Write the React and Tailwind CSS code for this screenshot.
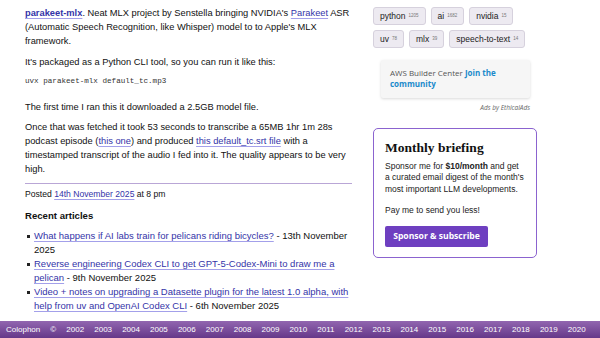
const years = Array.from({ length: 19 }, (_, i) => 2002 + i);

const tags = [
  ["python", "1205"],
  ["ai", "1682"],
  ["nvidia", "15"],
  ["uv", "78"],
  ["mlx", "39"],
  ["speech-to-text", "14"],
];

const recent = [
  ["What happens if AI labs train for pelicans riding bicycles?", "13th November 2025"],
  ["Reverse engineering Codex CLI to get GPT-5-Codex-Mini to draw me a pelican", "9th November 2025"],
  ["Video + notes on upgrading a Datasette plugin for the latest 1.0 alpha, with help from uv and OpenAI Codex CLI", "6th November 2025"],
];

function A({ children, bold }) {
  return (
    <a
      href="#"
      className={`text-[#3434a8] underline decoration-[#a3a0ea] underline-offset-2 ${bold ? "font-bold" : ""}`}
    >
      {children}
    </a>
  );
}

export default function App() {
  return (
    <div className="w-[600px] h-[338px] overflow-hidden bg-white font-['Liberation_Sans',Arial,sans-serif] text-[#111]">
      <div className="h-[321px] overflow-hidden flex">
        {/* Main column */}
        <div className="ml-[25px] w-[333px] shrink-0 pt-[6px] text-[9.3px] leading-[14px]">
          <p className="mb-[7px]">
            <A bold>parakeet-mlx</A>. Neat MLX project by Senstella bringing NVIDIA's <A>Parakeet</A> ASR
            (Automatic Speech Recognition, like Whisper) model to to Apple's MLX framework.
          </p>
          <p className="mb-[5px]">It's packaged as a Python CLI tool, so you can run it like this:</p>
          <div className="font-['Liberation_Mono','Courier_New',monospace] text-[7.6px] leading-[14px] text-[#333] mb-[12px] whitespace-pre">
            uvx parakeet-mlx default_tc.mp3
          </div>
          <p className="mb-[6px]">The first time I ran this it downloaded a 2.5GB model file.</p>
          <p className="mb-[7px]">
            Once that was fetched it took 53 seconds to transcribe a 65MB 1hr 1m 28s podcast episode (
            <A>this one</A>) and produced <A>this default_tc.srt file</A> with a timestamped transcript of
            the audio I fed into it. The quality appears to be very high.
          </p>
          <div className="w-[327px] border-t border-[#b9a6d6] pt-[3px] text-[8.6px]">
            Posted <A>14th November 2025</A> at 8 pm
          </div>
          <h3 className="font-bold text-[9.6px] mt-[8px] mb-[6px]">Recent articles</h3>
          <ul className="text-[9.5px]">
            {recent.map(([t, d]) => (
              <li key={t} className="flex">
                <span className="w-[9px] shrink-0 flex justify-start pt-[6px] pl-[2px]">
                  <span className="block w-[3px] h-[3px] bg-[#222]" />
                </span>
                <span>
                  <A>{t}</A> - {d}
                </span>
              </li>
            ))}
          </ul>
        </div>

        {/* Sidebar */}
        <div className="ml-[15px] w-[170px] pt-[7px]">
          <div className="flex flex-wrap gap-x-[5px] gap-y-[5px] w-[170px]">
            {tags.map(([n, c]) => (
              <span
                key={n}
                className="h-[18px] flex items-center gap-[3px] px-[6px] rounded-[3px] bg-[#edeaf1] border border-[#d6d1dd] text-[8.5px] text-[#222]"
              >
                {n}
                <span className="text-[4.5px] text-[#777]">{c}</span>
              </span>
            ))}
          </div>

          <div className="ml-[8px] mt-[12px] w-[149px] h-[38px] bg-[#f6f6f6] rounded-[2px] shadow-[0_1px_3px_rgba(0,0,0,0.15)] px-[9px] pt-[7px] text-[8px] leading-[11px] text-[#555] font-['Open_Sans',sans-serif]">
            AWS Builder Center <span className="font-bold text-[#1b8acb]">Join the community</span>
          </div>
          <div className="w-[157px] text-right mt-[5px] text-[6.5px] italic text-[#666] font-['Open_Sans',sans-serif]">
            Ads by EthicalAds
          </div>

          <div className="mt-[15px] w-[164px] h-[130px] border-[1.5px] border-[#8b63cf] rounded-[5px] px-[11px] pt-[9px]">
            <h2 className="font-['Liberation_Serif',Georgia,serif] font-bold text-[13.5px] leading-[20px] text-[#111]">
              Monthly briefing
            </h2>
            <p className="mt-[3px] text-[8.5px] leading-[11.5px] text-[#222]">
              Sponsor me for <b>$10/month</b> and get a curated email digest of the month's most important
              LLM developments.
            </p>
            <p className="mt-[10px] text-[8.5px] leading-[11.5px] text-[#222]">Pay me to send you less!</p>
            <button className="mt-[9px] w-[103px] h-[21px] rounded-[2px] bg-[#6e3fc0] text-white font-bold text-[8.6px] font-['Open_Sans',sans-serif]">
              Sponsor &amp; subscribe
            </button>
          </div>
        </div>
      </div>

      {/* Footer */}
      <div className="h-[17px] bg-gradient-to-b from-[#9266b0] to-[#663889] flex items-center pl-[6px] gap-[10.1px] text-white text-[8px]">
        <span>Colophon</span>
        <span>©</span>
        {years.map((y) => (
          <span key={y}>{y}</span>
        ))}
      </div>
    </div>
  );
}
